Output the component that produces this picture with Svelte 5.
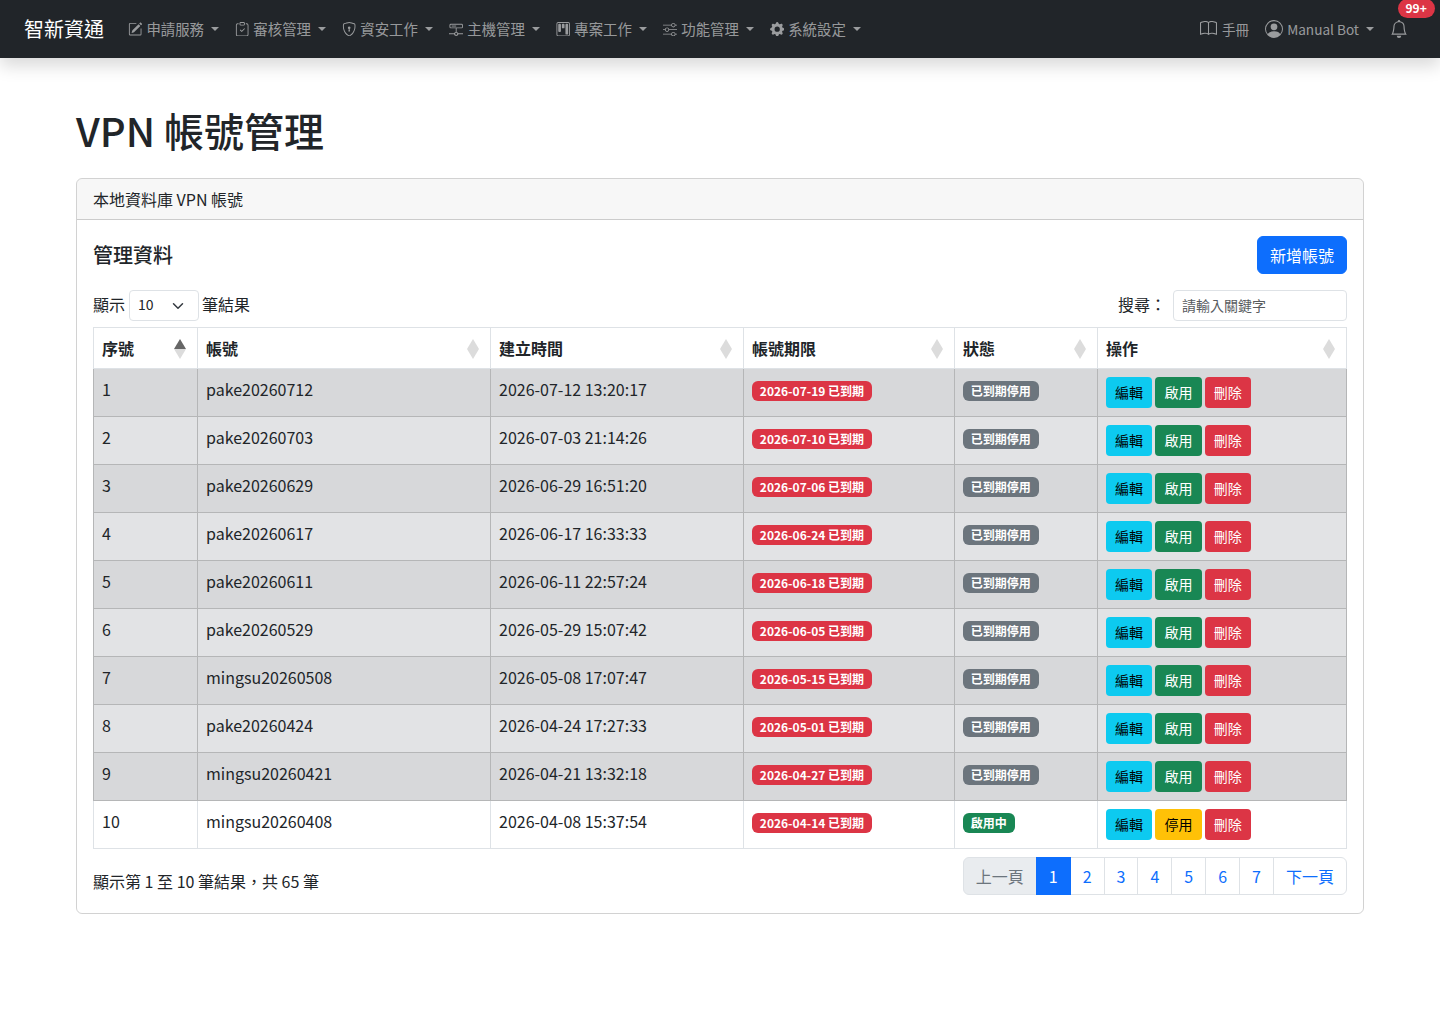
<script>
  const menus = [
    { label: '申請服務', icon: 'pencil' },
    { label: '審核管理', icon: 'clipboard' },
    { label: '資安工作', icon: 'shield' },
    { label: '主機管理', icon: 'server' },
    { label: '專案工作', icon: 'kanban' },
    { label: '功能管理', icon: 'sliders' },
    { label: '系統設定', icon: 'gear' }
  ];

  const rows = [
    ['1', 'pake20260712', '2026-07-12 13:20:17', '2026-07-19'],
    ['2', 'pake20260703', '2026-07-03 21:14:26', '2026-07-10'],
    ['3', 'pake20260629', '2026-06-29 16:51:20', '2026-07-06'],
    ['4', 'pake20260617', '2026-06-17 16:33:33', '2026-06-24'],
    ['5', 'pake20260611', '2026-06-11 22:57:24', '2026-06-18'],
    ['6', 'pake20260529', '2026-05-29 15:07:42', '2026-06-05'],
    ['7', 'mingsu20260508', '2026-05-08 17:07:47', '2026-05-15'],
    ['8', 'pake20260424', '2026-04-24 17:27:33', '2026-05-01'],
    ['9', 'mingsu20260421', '2026-04-21 13:32:18', '2026-04-27'],
    ['10', 'mingsu20260408', '2026-04-08 15:37:54', '2026-04-14']
  ];

  const columns = [
    { label: '序號', width: 104, active: true },
    { label: '帳號', width: 293 },
    { label: '建立時間', width: 253 },
    { label: '帳號期限', width: 211 },
    { label: '狀態', width: 143 },
    { label: '操作', width: 249 }
  ];
</script>

{#snippet icon(name)}
  <svg class="bi" viewBox="0 0 16 16" fill="currentColor" aria-hidden="true">
    {#if name === 'pencil'}
      <path d="M15.502 1.94a.5.5 0 0 1 0 .706L14.459 3.69l-2-2L13.502.646a.5.5 0 0 1 .707 0l1.293 1.293zm-1.75 2.456-2-2L4.939 9.21a.5.5 0 0 0-.121.196l-.805 2.414a.25.25 0 0 0 .316.316l2.414-.805a.5.5 0 0 0 .196-.12l6.813-6.814z"/>
      <path fill-rule="evenodd" d="M1 13.5A1.5 1.5 0 0 0 2.5 15h11a1.5 1.5 0 0 0 1.5-1.5v-6a.5.5 0 0 0-1 0v6a.5.5 0 0 1-.5.5h-11a.5.5 0 0 1-.5-.5v-11a.5.5 0 0 1 .5-.5H9a.5.5 0 0 0 0-1H2.5A1.5 1.5 0 0 0 1 2.5v11z"/>
    {:else if name === 'clipboard'}
      <path fill-rule="evenodd" d="M10.854 7.146a.5.5 0 0 1 0 .708l-3 3a.5.5 0 0 1-.708 0l-1.5-1.5a.5.5 0 1 1 .708-.708L7.5 9.793l2.646-2.647a.5.5 0 0 1 .708 0z"/>
      <path d="M4 1.5H3a2 2 0 0 0-2 2V14a2 2 0 0 0 2 2h10a2 2 0 0 0 2-2V3.5a2 2 0 0 0-2-2h-1v1h1a1 1 0 0 1 1 1V14a1 1 0 0 1-1 1H3a1 1 0 0 1-1-1V3.5a1 1 0 0 1 1-1h1v-1z"/>
      <path d="M9.5 1a.5.5 0 0 1 .5.5v1a.5.5 0 0 1-.5.5h-3a.5.5 0 0 1-.5-.5v-1a.5.5 0 0 1 .5-.5h3zm-3-1A1.5 1.5 0 0 0 5 1.5v1A1.5 1.5 0 0 0 6.5 4h3A1.5 1.5 0 0 0 11 2.5v-1A1.5 1.5 0 0 0 9.5 0h-3z"/>
    {:else if name === 'shield'}
      <path d="M5.338 1.59a61.44 61.44 0 0 0-2.837.856.481.481 0 0 0-.328.39c-.554 4.157.726 7.19 2.253 9.188a10.725 10.725 0 0 0 2.287 2.233c.346.244.652.42.893.533.12.057.218.095.293.118a.55.55 0 0 0 .101.025.615.615 0 0 0 .1-.025c.076-.023.174-.061.294-.118.24-.113.547-.29.893-.533a10.726 10.726 0 0 0 2.287-2.233c1.527-1.997 2.807-5.031 2.253-9.188a.48.48 0 0 0-.328-.39c-.651-.213-1.75-.56-2.837-.855C9.552 1.29 8.531 1.067 8 1.067c-.53 0-1.552.223-2.662.524zM5.072.56C6.157.265 7.31 0 8 0s1.843.265 2.928.56c1.11.3 2.229.655 2.887.87a1.54 1.54 0 0 1 1.044 1.262c.596 4.477-.787 7.795-2.465 9.99a11.775 11.775 0 0 1-2.517 2.453 7.159 7.159 0 0 1-1.048.625c-.28.132-.581.24-.829.24s-.548-.108-.829-.24a7.158 7.158 0 0 1-1.048-.625 11.777 11.777 0 0 1-2.517-2.453C1.928 10.487.545 7.169 1.141 2.692A1.54 1.54 0 0 1 2.185 1.43 62.456 62.456 0 0 1 5.072.56z"/>
      <path d="M9.5 6.5a1.5 1.5 0 0 1-1 1.415l.385 1.99a.5.5 0 0 1-.491.595h-.788a.5.5 0 0 1-.49-.595l.384-1.99a1.5 1.5 0 1 1 2-1.415z"/>
    {:else if name === 'server'}
      <path fill-rule="evenodd" d="M2 2h12a1.5 1.5 0 0 1 1.5 1.5v2A1.5 1.5 0 0 1 14 7H8.5v4.05a2.5 2.5 0 0 1 1.95 1.45H16v1h-5.55a2.5 2.5 0 0 1-4.9 0H0v-1h5.55A2.5 2.5 0 0 1 7.5 11.05V7H2A1.5 1.5 0 0 1 .5 5.5v-2A1.5 1.5 0 0 1 2 2zm0 1a.5.5 0 0 0-.5.5v2A.5.5 0 0 0 2 6h12a.5.5 0 0 0 .5-.5v-2A.5.5 0 0 0 14 3H2zm6 9a1.2 1.2 0 1 0 0 2.4A1.2 1.2 0 0 0 8 12z"/>
      <path d="M3 4h5v1H3z"/>
    {:else if name === 'kanban'}
      <path d="M13.5 1a1 1 0 0 1 1 1v12a1 1 0 0 1-1 1h-11a1 1 0 0 1-1-1V2a1 1 0 0 1 1-1h11zm-11-1a2 2 0 0 0-2 2v12a2 2 0 0 0 2 2h11a2 2 0 0 0 2-2V2a2 2 0 0 0-2-2h-11z"/>
      <path d="M6.5 3a1 1 0 0 1 1-1h1a1 1 0 0 1 1 1v3a1 1 0 0 1-1 1h-1a1 1 0 0 1-1-1V3zm-4 0a1 1 0 0 1 1-1h1a1 1 0 0 1 1 1v7a1 1 0 0 1-1 1h-1a1 1 0 0 1-1-1V3zm8 0a1 1 0 0 1 1-1h1a1 1 0 0 1 1 1v10a1 1 0 0 1-1 1h-1a1 1 0 0 1-1-1V3z"/>
    {:else if name === 'sliders'}
      <path fill-rule="evenodd" d="M11.5 2a1.5 1.5 0 1 0 0 3 1.5 1.5 0 0 0 0-3zM9.05 3a2.5 2.5 0 0 1 4.9 0H16v1h-2.05a2.5 2.5 0 0 1-4.9 0H0V3h9.05zM4.5 7a1.5 1.5 0 1 0 0 3 1.5 1.5 0 0 0 0-3zM2.05 8a2.5 2.5 0 0 1 4.9 0H16v1H6.95a2.5 2.5 0 0 1-4.9 0H0V8h2.05zm9.45 4a1.5 1.5 0 1 0 0 3 1.5 1.5 0 0 0 0-3zm-2.45 1a2.5 2.5 0 0 1 4.9 0H16v1h-2.05a2.5 2.5 0 0 1-4.9 0H0v-1h9.05z"/>
    {:else if name === 'gear'}
      <path d="M9.405 1.05c-.413-1.4-2.397-1.4-2.81 0l-.1.34a1.464 1.464 0 0 1-2.105.872l-.31-.17c-1.283-.698-2.686.705-1.987 1.987l.169.311c.446.82.023 1.841-.872 2.105l-.34.1c-1.4.413-1.4 2.397 0 2.81l.34.1a1.464 1.464 0 0 1 .872 2.105l-.17.31c-.698 1.283.705 2.686 1.987 1.987l.311-.169a1.464 1.464 0 0 1 2.105.872l.1.34c.413 1.4 2.397 1.4 2.81 0l.1-.34a1.464 1.464 0 0 1 2.105-.872l.31.17c1.283.698 2.686-.705 1.987-1.987l-.169-.311a1.464 1.464 0 0 1 .872-2.105l.34-.1c1.4-.413 1.4-2.397 0-2.81l-.34-.1a1.464 1.464 0 0 1-.872-2.105l.17-.31c.698-1.283-.705-2.686-1.987-1.987l-.311.169a1.464 1.464 0 0 1-2.105-.872l-.1-.34zM8 10.93a2.929 2.929 0 1 1 0-5.86 2.929 2.929 0 0 1 0 5.858z"/>
    {:else if name === 'book'}
      <path d="M1 2.828c.885-.37 2.154-.769 3.388-.893 1.33-.134 2.458.063 3.112.752v9.746c-.935-.53-2.12-.603-3.213-.493-1.18.12-2.37.461-3.287.811V2.828zm7.5-.141c.654-.689 1.782-.886 3.112-.752 1.234.124 2.503.523 3.388.893v9.923c-.918-.35-2.107-.692-3.287-.81-1.094-.111-2.278-.039-3.213.492V2.687zM8 1.783C7.015.936 5.587.81 4.287.94c-1.514.153-3.042.672-3.994 1.105A.5.5 0 0 0 0 2.5v11a.5.5 0 0 0 .707.455c.882-.4 2.303-.881 3.68-1.02 1.409-.142 2.59.087 3.223.877a.5.5 0 0 0 .78 0c.633-.79 1.814-1.019 3.222-.877 1.378.139 2.8.62 3.681 1.02A.5.5 0 0 0 16 13.5v-11a.5.5 0 0 0-.293-.455c-.952-.433-2.48-.952-3.994-1.105C10.413.809 8.985.936 8 1.783z"/>
    {:else if name === 'person'}
      <path d="M11 6a3 3 0 1 1-6 0 3 3 0 0 1 6 0z"/>
      <path fill-rule="evenodd" d="M0 8a8 8 0 1 1 16 0A8 8 0 0 1 0 8zm8-7a7 7 0 0 0-5.468 11.37C3.242 11.226 4.805 10 8 10s4.757 1.225 5.468 2.37A7 7 0 0 0 8 1z"/>
    {:else if name === 'bell'}
      <path d="M8 16a2 2 0 0 0 2-2H6a2 2 0 0 0 2 2zM8 1.918l-.797.161A4.002 4.002 0 0 0 4 6c0 .628-.134 2.197-.459 3.742-.16.767-.376 1.566-.663 2.258h10.244c-.287-.692-.502-1.49-.663-2.258C12.134 8.197 12 6.628 12 6a4.002 4.002 0 0 0-3.203-3.92L8 1.917zM14.22 12c.223.447.481.801.78 1H1c.299-.199.557-.553.78-1C2.68 10.2 3 6.88 3 6c0-2.42 1.72-4.44 4.005-4.901a1 1 0 1 1 1.99 0A5.002 5.002 0 0 1 13 6c0 .88.32 4.2 1.22 6z"/>
    {/if}
  </svg>
{/snippet}

<nav class="navbar">
  <a class="brand" href="#top">智新資通</a>
  <ul class="menu">
    {#each menus as m}
      <li class="nav-link caret">{@render icon(m.icon)}<span>{m.label}</span></li>
    {/each}
  </ul>
  <ul class="menu right">
    <li class="nav-link manual">{@render icon('book')}<span>手冊</span></li>
    <li class="nav-link caret user">{@render icon('person')}<span>Manual Bot</span></li>
    <li class="bell">
      {@render icon('bell')}
      <span class="count">99+</span>
    </li>
  </ul>
</nav>

<main class="container">
  <h1>VPN 帳號管理</h1>

  <section class="card">
    <header class="card-header">本地資料庫 VPN 帳號</header>
    <div class="card-body">
      <div class="title-row">
        <h5>管理資料</h5>
        <button class="btn-add">新增帳號</button>
      </div>

      <div class="tools">
        <div class="length">
          顯示
          <span class="select"><span class="value">10</span>
            <svg viewBox="0 0 16 16" width="16" height="16"><path fill="none" stroke="#343a40" stroke-linecap="round" stroke-linejoin="round" stroke-width="2" d="m2 5 6 6 6-6" /></svg>
          </span>
          筆結果
        </div>
        <div class="search">
          搜尋：
          <input type="search" placeholder="請輸入關鍵字" />
        </div>
      </div>

      <table>
        <colgroup>
          {#each columns as c}
            <col style="width: {c.width}px" />
          {/each}
        </colgroup>
        <thead>
          <tr>
            {#each columns as c}
              <th>
                {c.label}
                <span class="sort" class:active={c.active}><i class="up"></i><i class="down"></i></span>
              </th>
            {/each}
          </tr>
        </thead>
        <tbody>
          {#each rows as r, i}
            {@const enabled = i === 9}
            <tr class:odd={i % 2 === 0} class:plain={enabled}>
              <td>{r[0]}</td>
              <td>{r[1]}</td>
              <td>{r[2]}</td>
              <td><span class="badge danger">{r[3]} 已到期</span></td>
              <td>
                {#if enabled}
                  <span class="badge success">啟用中</span>
                {:else}
                  <span class="badge secondary">已到期停用</span>
                {/if}
              </td>
              <td>
                <div class="actions">
                  <button class="btn info">編輯</button>
                  {#if enabled}
                    <button class="btn warning">停用</button>
                  {:else}
                    <button class="btn success">啟用</button>
                  {/if}
                  <button class="btn danger">刪除</button>
                </div>
              </td>
            </tr>
          {/each}
        </tbody>
      </table>

      <div class="foot">
        <div class="info-text">顯示第 1 至 10 筆結果，共 65 筆</div>
        <ul class="pagination">
          <li class="disabled">上一頁</li>
          <li class="current">1</li>
          {#each [2, 3, 4, 5, 6, 7] as p}
            <li>{p}</li>
          {/each}
          <li>下一頁</li>
        </ul>
      </div>
    </div>
  </section>
</main>

<style>
  :global(body) {
    margin: 0;
    background: #fff;
    color: #212529;
    font-family: "Noto Sans CJK TC", "Noto Sans", sans-serif;
    font-size: 16px;
    line-height: 1.5;
  }

  .navbar {
    display: flex;
    align-items: center;
    height: 58px;
    padding: 0 24px;
    background: #212529;
    box-shadow: 0 8px 16px rgba(0, 0, 0, 0.15);
    position: relative;
  }

  .brand {
    color: #fff;
    font-size: 20px;
    text-decoration: none;
    margin-right: 16px;
  }

  .menu {
    display: flex;
    align-items: center;
    list-style: none;
    margin: 0;
    padding: 0;
  }

  .menu.right {
    margin-left: auto;
  }

  .nav-link {
    display: flex;
    align-items: center;
    gap: 4px;
    padding: 8px;
    color: rgba(255, 255, 255, 0.55);
    font-size: 14.4px;
    white-space: nowrap;
  }

  .bi {
    width: 14.4px;
    height: 14.4px;
    flex: none;
  }

  .caret::after {
    content: '';
    margin-left: 3px;
    border-top: 4.3px solid;
    border-left: 4.3px solid transparent;
    border-right: 4.3px solid transparent;
  }

  .manual,
  .user {
    font-size: 13.6px;
  }

  .manual {
    gap: 5px;
  }

  .manual .bi {
    width: 17px;
    height: 17px;
  }

  .user .bi {
    width: 18px;
    height: 18px;
  }

  .bell {
    position: relative;
    color: rgba(255, 255, 255, 0.55);
    padding: 0 8px;
    display: flex;
  }

  .bell .bi {
    width: 18px;
    height: 18px;
  }

  .count {
    position: absolute;
    top: -21px;
    left: 15.5px;
    padding: 3px 8px 4px;
    border-radius: 10px;
    background: #dc3545;
    color: #fff;
    font-size: 12px;
    font-weight: 700;
    line-height: 1;
  }

  .container {
    padding: 48px 76px 0;
  }

  h1 {
    margin: 0 0 24px;
    font-size: 40px;
    font-weight: 500;
    line-height: 1.2;
  }

  .card {
    border: 1px solid rgba(0, 0, 0, 0.175);
    border-radius: 6px;
  }

  .card-header {
    padding: 8px 16px;
    background: rgba(0, 0, 0, 0.03);
    border-bottom: 1px solid rgba(0, 0, 0, 0.175);
    border-radius: 5px 5px 0 0;
  }

  .card-body {
    padding: 16px 16px 18px;
  }

  .title-row {
    display: flex;
    justify-content: space-between;
    align-items: center;
    margin-bottom: 16px;
  }

  h5 {
    margin: 0;
    font-size: 20px;
    font-weight: 500;
    line-height: 1.2;
  }

  .btn-add {
    height: 38px;
    padding: 0 12px;
    font: inherit;
    color: #fff;
    background: #0d6efd;
    border: 1px solid #0d6efd;
    border-radius: 6px;
  }

  .tools {
    display: flex;
    justify-content: space-between;
    align-items: flex-start;
    margin-bottom: 6px;
  }

  .length,
  .search {
    display: flex;
    align-items: flex-start;
    line-height: 28px;
  }

  .select {
    display: flex;
    align-items: center;
    justify-content: space-between;
    width: 70px;
    height: 31px;
    box-sizing: border-box;
    margin: 0 3px 0 4px;
    padding: 0 14px 0 8px;
    border: 1px solid #dee2e6;
    border-radius: 4px;
    font-size: 14px;
  }

  .value {
    line-height: 27px;
    padding-bottom: 2px;
  }

  .select svg {
    width: 12px;
    height: 12px;
  }

  .search input {
    width: 174px;
    height: 31px;
    box-sizing: border-box;
    margin-left: 7px;
    padding: 0 8px 2px;
    border: 1px solid #dee2e6;
    border-radius: 4px;
    font: inherit;
    font-size: 14px;
    line-height: 1.5;
    color: #212529;
  }

  .search input::placeholder {
    color: #595c5f;
  }

  table {
    width: 1253px;
    border-collapse: collapse;
    table-layout: fixed;
  }

  th,
  td {
    padding: 8px;
    border: 1px solid #dee2e6;
    text-align: left;
    vertical-align: top;
  }

  th {
    position: relative;
    font-weight: 700;
    padding-right: 26px;
  }

  tbody td {
    height: 48px;
    box-sizing: border-box;
    background: #e2e3e5;
    border-color: #b5b6b7;
  }

  tbody tr.odd td {
    background: #d7d8da;
  }

  tbody tr.plain td {
    background: #fff;
    border-color: #dee2e6;
  }

  tbody tr.plain {
    border-top: 1px solid #b5b6b7;
  }

  .sort {
    position: absolute;
    right: 11px;
    top: 10.5px;
    display: flex;
    flex-direction: column;
  }

  .sort i {
    display: block;
    width: 0;
    height: 0;
    border-left: 6.5px solid transparent;
    border-right: 6.5px solid transparent;
  }

  .sort .up {
    border-bottom: 10px solid #dcdcdc;
  }

  .sort .down {
    border-top: 10px solid #dcdcdc;
  }

  .sort.active .up {
    border-bottom-color: #666;
  }

  .badge {
    display: inline-block;
    padding: 4.2px 7.8px;
    border-radius: 6px;
    color: #fff;
    font-size: 12px;
    font-weight: 700;
    line-height: 1;
    vertical-align: top;
    margin-top: 4px;
  }

  .badge.danger {
    background: #dc3545;
  }

  .badge.secondary {
    background: #6c757d;
  }

  .badge.success {
    background: #198754;
  }

  .actions {
    display: flex;
    gap: 3.2px;
  }

  .btn {
    width: 46.2px;
    height: 31px;
    padding: 0;
    border: 1px solid transparent;
    border-radius: 4px;
    font: inherit;
    font-size: 14px;
  }

  .btn.info {
    background: #0dcaf0;
    color: #000;
  }

  .btn.success {
    background: #198754;
    color: #fff;
  }

  .btn.warning {
    background: #ffc107;
    color: #000;
  }

  .btn.danger {
    background: #dc3545;
    color: #fff;
  }

  .foot {
    display: flex;
    justify-content: space-between;
    margin-top: 8px;
  }

  .info-text {
    padding-top: 12px;
  }

  .pagination {
    display: flex;
    list-style: none;
    margin: 0;
    padding: 0;
    color: #0d6efd;
  }

  .pagination li {
    padding: 6px 12px;
    border: 1px solid #dee2e6;
    margin-left: -1px;
  }

  .pagination li:first-child {
    border-radius: 6px 0 0 6px;
  }

  .pagination li:last-child {
    border-radius: 0 6px 6px 0;
  }

  .pagination .disabled {
    background: #e9ecef;
    color: #6c757d;
  }

  .pagination .current {
    position: relative;
    z-index: 1;
    background: #0d6efd;
    border-color: #0d6efd;
    color: #fff;
  }
</style>
